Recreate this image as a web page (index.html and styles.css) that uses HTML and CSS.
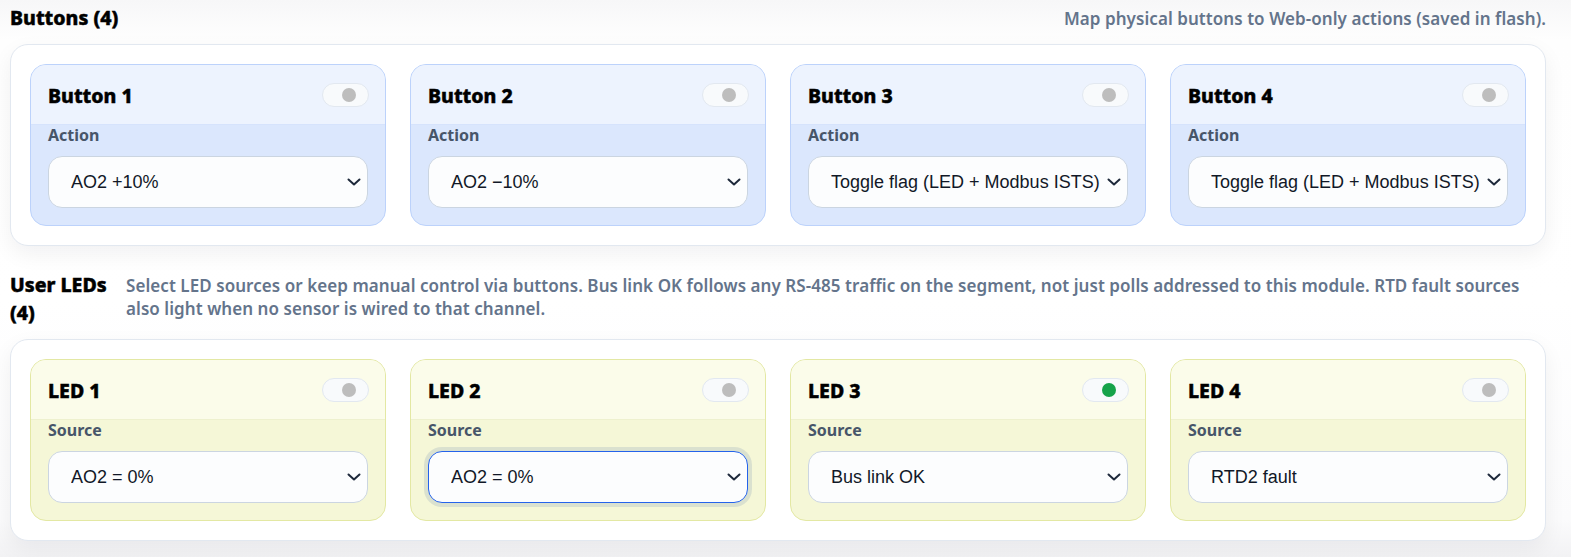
FILE: index.html
```html
<!DOCTYPE html>
<html lang="en">
<head>
<meta charset="utf-8">
<title>Buttons and LEDs</title>
<link rel="stylesheet" href="styles.css">
</head>
<body>
<main class="page">
  <section class="section">
    <div class="section-head split">
      <h2 class="section-title">Buttons (4)</h2>
      <p class="section-desc">Map physical buttons to Web-only actions (saved in flash).</p>
    </div>
    <div class="panel">
      <div class="grid">
        <div class="card card-blue">
          <div class="card-head"><span class="card-title">Button 1</span><span class="toggle"><span class="dot"></span></span></div>
          <div class="card-body">
            <label class="field-label">Action</label>
            <div class="select-wrap">
              <select class="select"><option>AO2 +10%</option></select>
              <svg class="chev" viewBox="0 0 14 8" width="14" height="8"><path d="M1.5 1.5 L7 6.5 L12.5 1.5" fill="none" stroke="#1e293b" stroke-width="2" stroke-linecap="round" stroke-linejoin="round"/></svg>
            </div>
          </div>
        </div>
        <div class="card card-blue">
          <div class="card-head"><span class="card-title">Button 2</span><span class="toggle"><span class="dot"></span></span></div>
          <div class="card-body">
            <label class="field-label">Action</label>
            <div class="select-wrap">
              <select class="select"><option>AO2 −10%</option></select>
              <svg class="chev" viewBox="0 0 14 8" width="14" height="8"><path d="M1.5 1.5 L7 6.5 L12.5 1.5" fill="none" stroke="#1e293b" stroke-width="2" stroke-linecap="round" stroke-linejoin="round"/></svg>
            </div>
          </div>
        </div>
        <div class="card card-blue">
          <div class="card-head"><span class="card-title">Button 3</span><span class="toggle"><span class="dot"></span></span></div>
          <div class="card-body">
            <label class="field-label">Action</label>
            <div class="select-wrap">
              <select class="select"><option>Toggle flag (LED + Modbus ISTS)</option></select>
              <svg class="chev" viewBox="0 0 14 8" width="14" height="8"><path d="M1.5 1.5 L7 6.5 L12.5 1.5" fill="none" stroke="#1e293b" stroke-width="2" stroke-linecap="round" stroke-linejoin="round"/></svg>
            </div>
          </div>
        </div>
        <div class="card card-blue">
          <div class="card-head"><span class="card-title">Button 4</span><span class="toggle"><span class="dot"></span></span></div>
          <div class="card-body">
            <label class="field-label">Action</label>
            <div class="select-wrap">
              <select class="select"><option>Toggle flag (LED + Modbus ISTS)</option></select>
              <svg class="chev" viewBox="0 0 14 8" width="14" height="8"><path d="M1.5 1.5 L7 6.5 L12.5 1.5" fill="none" stroke="#1e293b" stroke-width="2" stroke-linecap="round" stroke-linejoin="round"/></svg>
            </div>
          </div>
        </div>
      </div>
    </div>
  </section>

  <section class="section">
    <div class="section-head">
      <h2 class="section-title narrow">User LEDs (4)</h2>
      <p class="section-desc left">Select LED sources or keep manual control via buttons. Bus link OK follows any RS-485 traffic on the segment, not just polls addressed to this module. RTD fault sources also light when no sensor is wired to that channel.</p>
    </div>
    <div class="panel">
      <div class="grid">
        <div class="card card-yellow">
          <div class="card-head"><span class="card-title">LED 1</span><span class="toggle"><span class="dot"></span></span></div>
          <div class="card-body">
            <label class="field-label">Source</label>
            <div class="select-wrap">
              <select class="select"><option>AO2 = 0%</option></select>
              <svg class="chev" viewBox="0 0 14 8" width="14" height="8"><path d="M1.5 1.5 L7 6.5 L12.5 1.5" fill="none" stroke="#1e293b" stroke-width="2" stroke-linecap="round" stroke-linejoin="round"/></svg>
            </div>
          </div>
        </div>
        <div class="card card-yellow">
          <div class="card-head"><span class="card-title">LED 2</span><span class="toggle"><span class="dot"></span></span></div>
          <div class="card-body">
            <label class="field-label">Source</label>
            <div class="select-wrap">
              <select class="select focused"><option>AO2 = 0%</option></select>
              <svg class="chev" viewBox="0 0 14 8" width="14" height="8"><path d="M1.5 1.5 L7 6.5 L12.5 1.5" fill="none" stroke="#1e293b" stroke-width="2" stroke-linecap="round" stroke-linejoin="round"/></svg>
            </div>
          </div>
        </div>
        <div class="card card-yellow">
          <div class="card-head"><span class="card-title">LED 3</span><span class="toggle"><span class="dot on"></span></span></div>
          <div class="card-body">
            <label class="field-label">Source</label>
            <div class="select-wrap">
              <select class="select"><option>Bus link OK</option></select>
              <svg class="chev" viewBox="0 0 14 8" width="14" height="8"><path d="M1.5 1.5 L7 6.5 L12.5 1.5" fill="none" stroke="#1e293b" stroke-width="2" stroke-linecap="round" stroke-linejoin="round"/></svg>
            </div>
          </div>
        </div>
        <div class="card card-yellow">
          <div class="card-head"><span class="card-title">LED 4</span><span class="toggle"><span class="dot"></span></span></div>
          <div class="card-body">
            <label class="field-label">Source</label>
            <div class="select-wrap">
              <select class="select"><option>RTD2 fault</option></select>
              <svg class="chev" viewBox="0 0 14 8" width="14" height="8"><path d="M1.5 1.5 L7 6.5 L12.5 1.5" fill="none" stroke="#1e293b" stroke-width="2" stroke-linecap="round" stroke-linejoin="round"/></svg>
            </div>
          </div>
        </div>
      </div>
    </div>
  </section>
</main>
</body>
</html>
```

FILE: styles.css
```css
* { box-sizing: border-box; }

html, body {
  margin: 0;
  padding: 0;
}

body {
  background: linear-gradient(#f7f7f8 0px, #fefefe 40px, #ffffff 300px, #fbfbfc 520px, #f2f2f4 557px);
  font-family: "Noto Sans", "Open Sans", sans-serif;
  color: #0f172a;
  min-height: 557px;
}

.page {
  padding: 4px 25px 0 10px;
}

.section {
  margin-bottom: 25px;
}

.section-head {
  display: flex;
  align-items: baseline;
  gap: 16px;
  margin-bottom: 12px;
}

.section-head.split {
  justify-content: space-between;
}

.section-title {
  margin: 0;
  font-family: "Noto Sans", "Open Sans", sans-serif;
  font-size: 19.5px;
  line-height: 28px;
  font-weight: 800;
  color: #000;
  flex: 0 0 auto;
  -webkit-text-stroke: 0.45px #000;
}

.section-title.narrow {
  flex: 0 0 100px;
}

.section-desc {
  margin: 0;
  font-size: 17px;
  line-height: 23px;
  font-weight: 600;
  letter-spacing: 0.06px;
  color: #64748b;
  text-align: right;
}

.section-desc.left {
  text-align: left;
  flex: 1 1 auto;
}

.panel {
  background: #ffffff;
  border: 1px solid #e2e8f0;
  border-radius: 18px;
  padding: 19px;
  box-shadow: 0 8px 22px rgba(15, 23, 42, 0.06);
}

.grid {
  display: grid;
  grid-template-columns: repeat(4, 1fr);
  gap: 24px;
}

.card {
  border-radius: 16px;
  border: 1px solid;
  overflow: hidden;
}

.card-blue {
  border-color: #bcd2fb;
  background: #dbe7fd;
}

.card-blue .card-head {
  background: #edf3fe;
  border-bottom: 1px solid #d6e3fc;
}

.card-yellow {
  border-color: #e3e8a3;
  background: #f5f7d7;
}

.card-yellow .card-head {
  background: #fbfcea;
  border-bottom: 1px solid #eef1cf;
}

.card-head {
  height: 60px;
  display: flex;
  align-items: center;
  justify-content: space-between;
  padding: 0 16px 0 17px;
}

.card-title {
  font-family: "Noto Sans", "Open Sans", sans-serif;
  font-size: 19.5px;
  font-weight: 800;
  color: #000;
  margin-top: 2px;
  -webkit-text-stroke: 0.45px #000;
}

.toggle {
  width: 47px;
  height: 24px;
  border-radius: 12px;
  background: #f8fafc;
  border: 1px solid #e2e8f0;
  display: flex;
  align-items: center;
  justify-content: flex-end;
  padding-right: 12px;
  flex: 0 0 47px;
}

.dot {
  width: 14px;
  height: 14px;
  border-radius: 50%;
  background: #bdbdbd;
}

.dot.on {
  background: #16a34a;
}

.card-body {
  padding: 0 17px 17px 17px;
}

.field-label {
  display: block;
  font-size: 16px;
  line-height: 20px;
  font-weight: 700;
  color: #475569;
  margin-bottom: 11px;
}

.select-wrap {
  position: relative;
}

.select {
  display: block;
  width: 100%;
  height: 52px;
  appearance: none;
  -webkit-appearance: none;
  background: #fcfdfe;
  border: 1px solid #cbd5e1;
  border-radius: 14px;
  padding: 0 22px 0 22px;
  font-family: "Liberation Sans", Arial, sans-serif;
  font-size: 18px;
  color: #111827;
  outline: none;
}

.select.focused {
  border: 1.5px solid #2563eb;
  box-shadow: 0 0 0 4px rgba(100, 130, 170, 0.18);
}

.chev {
  position: absolute;
  right: 7px;
  top: 22px;
  pointer-events: none;
}
```
